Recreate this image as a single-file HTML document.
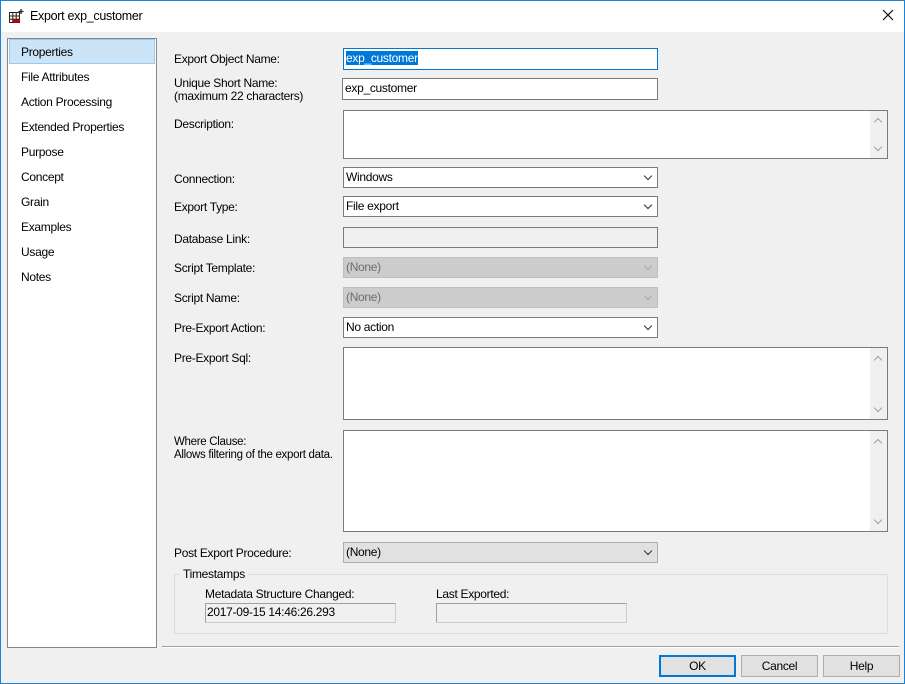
<!DOCTYPE html>
<html><head><style>
*{box-sizing:border-box;margin:0;padding:0}
body{width:905px;height:684px;overflow:hidden;background:#f0f0f0;font-family:"Liberation Sans",sans-serif;font-size:12px;letter-spacing:-0.3px;color:#000;position:relative}
.frame{position:absolute;left:0;top:0;width:905px;height:684px;border:1px solid #1883d7;pointer-events:none}
.title{position:absolute;left:0;top:0;width:905px;height:32px;background:#fff}
.a{position:absolute;white-space:nowrap}
.box{position:absolute;background:#fff;border:1px solid #7a7a7a;padding:2px 2px;line-height:15px;white-space:nowrap}
.dd:after{content:"";position:absolute;right:6px;top:5px;width:5px;height:5px;border-right:1px solid #333;border-bottom:1px solid #333;transform:rotate(45deg)}
.dis{background:#cccccc;border-color:#bfbfbf;color:#6d6d6d}
.dis:after{border-color:#aaa}
.ta:after{content:"";position:absolute;right:0;top:0;width:17px;bottom:0;background:#f0f0f0}
.sb{position:absolute;right:5px;width:6px;height:6px;border-left:1px solid #a0a0a0;border-top:1px solid #a0a0a0;z-index:2}
.btn{position:absolute;top:655px;height:22px;width:77px;background:#e1e1e1;border:1px solid #adadad;text-align:center;line-height:20px}
.nav{position:absolute;left:21px}
</style></head><body>
<div class="title"></div>
<svg class="a" style="left:8px;top:8px" width="16" height="16" viewBox="0 0 16 16"><g fill="none" stroke="#222" stroke-width="1"><rect x="1.5" y="4.5" width="10" height="10"/><line x1="1.5" y1="8" x2="11.5" y2="8"/><line x1="1.5" y1="11.2" x2="11.5" y2="11.2"/><line x1="4.8" y1="4.5" x2="4.8" y2="14.5"/><line x1="8.2" y1="4.5" x2="8.2" y2="14.5"/></g><rect x="5" y="11.5" width="7" height="3" fill="#c00"/><path d="M13 1v5M10.5 3.5h5" stroke="#222" stroke-width="1.3"/></svg>
<div class="a" style="left:30px;top:9px;font-size:12.5px">Export exp_customer</div>
<svg class="a" style="left:882px;top:9px" width="12" height="12"><path d="M1 1L11 11M11 1L1 11" stroke="#111" stroke-width="1.2"/></svg>

<div class="a" style="left:7px;top:38px;width:150px;height:610px;background:#fff;border:1px solid #828790"></div>
<div class="a" style="left:9px;top:39px;width:146px;height:25px;background:#cce4f7;border:1px solid #99c9ef"></div>
<div class="nav" style="top:45px">Properties</div>
<div class="nav" style="top:70px">File Attributes</div>
<div class="nav" style="top:95px">Action Processing</div>
<div class="nav" style="top:120px">Extended Properties</div>
<div class="nav" style="top:145px">Purpose</div>
<div class="nav" style="top:170px">Concept</div>
<div class="nav" style="top:195px">Grain</div>
<div class="nav" style="top:220px">Examples</div>
<div class="nav" style="top:245px">Usage</div>
<div class="nav" style="top:270px">Notes</div>

<div class="a" style="left:174px;top:52px">Export Object Name:</div>
<div class="a" style="left:174px;top:77px;line-height:13px">Unique Short Name:<br>(maximum 22 characters)</div>
<div class="a" style="left:174px;top:117px">Description:</div>
<div class="a" style="left:174px;top:172px">Connection:</div>
<div class="a" style="left:174px;top:200px">Export Type:</div>
<div class="a" style="left:174px;top:232px">Database Link:</div>
<div class="a" style="left:174px;top:261px">Script Template:</div>
<div class="a" style="left:174px;top:291px">Script Name:</div>
<div class="a" style="left:174px;top:321px">Pre-Export Action:</div>
<div class="a" style="left:174px;top:351px">Pre-Export Sql:</div>
<div class="a" style="left:174px;top:436px;line-height:13px;z-index:3;font-size:11.5px">Where Clause:<br>Allows filtering of the export data.</div>
<div class="a" style="left:174px;top:546px">Post Export Procedure:</div>

<div class="box" style="left:343px;top:48px;width:315px;height:22px;border-color:#0078d7"><span style="background:#0078d7;color:#fff">exp_customer</span></div>
<div class="box" style="left:342px;top:78px;width:316px;height:22px">exp_customer</div>
<div class="box ta" style="left:343px;top:110px;width:545px;height:49px"></div>
<div class="sb" style="left:875px;top:119px;transform:rotate(45deg)"></div>
<div class="sb" style="left:875px;top:144px;transform:rotate(225deg)"></div>
<div class="box dd" style="left:343px;top:167px;width:315px;height:21px">Windows</div>
<div class="box dd" style="left:343px;top:196px;width:315px;height:21px">File export</div>
<div class="box" style="left:343px;top:227px;width:315px;height:21px;background:#f0f0f0"></div>
<div class="box dd dis" style="left:343px;top:257px;width:315px;height:21px">(None)</div>
<div class="box dd dis" style="left:343px;top:287px;width:315px;height:21px">(None)</div>
<div class="box dd" style="left:343px;top:317px;width:315px;height:21px">No action</div>
<div class="box ta" style="left:343px;top:347px;width:545px;height:73px"></div>
<div class="sb" style="left:875px;top:357px;transform:rotate(45deg)"></div>
<div class="sb" style="left:875px;top:405px;transform:rotate(225deg)"></div>
<div class="box ta" style="left:343px;top:430px;width:545px;height:102px"></div>
<div class="sb" style="left:875px;top:440px;transform:rotate(45deg)"></div>
<div class="sb" style="left:875px;top:517px;transform:rotate(225deg)"></div>
<div class="box dd" style="left:343px;top:542px;width:315px;height:21px;background:#e1e1e1;border-color:#adadad">(None)</div>

<div class="a" style="left:174px;top:574px;width:714px;height:60px;border:1px solid #dcdcdc"></div>
<div class="a" style="left:180px;top:567px;background:#f0f0f0;padding:0 3px">Timestamps</div>
<div class="a" style="left:205px;top:587px">Metadata Structure Changed:</div>
<div class="a" style="left:436px;top:587px">Last Exported:</div>
<div class="a" style="left:205px;top:603px;width:191px;height:20px;border:1px solid #ccc;border-left-color:#a0a0a0;border-top-color:#a0a0a0;padding:1px 1px;line-height:15px">2017-09-15 14:46:26.293</div>
<div class="a" style="left:436px;top:603px;width:191px;height:20px;border:1px solid #ccc;border-left-color:#a0a0a0;border-top-color:#a0a0a0"></div>

<div class="a" style="left:162px;top:646px;width:737px;height:2px;border-top:1px solid #a0a0a0;border-bottom:1px solid #fff"></div>
<div class="btn" style="left:659px;border:2px solid #0078d7;line-height:18px">OK</div>
<div class="btn" style="left:741px">Cancel</div>
<div class="btn" style="left:823px">Help</div>
<div class="frame"></div>
</body></html>
